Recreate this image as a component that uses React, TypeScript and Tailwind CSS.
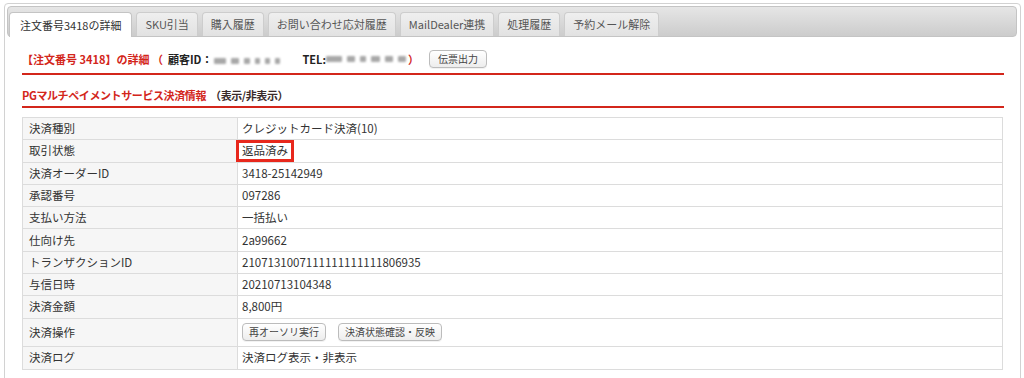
import React from "react";

const tabs = ["注文番号3418の詳細", "SKU引当", "購入履歴", "お問い合わせ応対履歴", "MailDealer連携", "処理履歴", "予約メール解除"];

const rows: { label: string; value: string }[] = [
  { label: "決済種別", value: "クレジットカード決済(10)" },
  { label: "取引状態", value: "返品済み" },
  { label: "決済オーダーID", value: "3418-25142949" },
  { label: "承認番号", value: "097286" },
  { label: "支払い方法", value: "一括払い" },
  { label: "仕向け先", value: "2a99662" },
  { label: "トランザクションID", value: "2107131007111111111111806935" },
  { label: "与信日時", value: "20210713104348" },
  { label: "決済金額", value: "8,800円" },
  { label: "決済操作", value: "" },
  { label: "決済ログ", value: "決済ログ表示・非表示" },
];

function SmallButton({ children, wide }: { children: React.ReactNode; wide?: boolean }) {
  return (
    <button className={`h-[18px] ${wide ? "px-[8px]" : "px-[6px]"} rounded-[4px] border border-[#bcbcbc] bg-gradient-to-b from-white to-[#ededed] text-[10px] leading-none text-[#444] shadow-[0_1px_0_rgba(0,0,0,0.05)]`}>
      {children}
    </button>
  );
}

// blurred-out personal info
function Blur({ widths }: { widths: number[] }) {
  return (
    <span className="inline-flex items-center gap-[5px] blur-[1.2px]">
      {widths.map((w, i) => (
        <span key={i} className="h-[6px] bg-[#a8a8a8] rounded-[1px]" style={{ width: w }} />
      ))}
    </span>
  );
}

export default function App() {
  return (
    <div className="w-[1024px] h-[378px] bg-white overflow-hidden pt-[3px] text-[11.5px] text-[#333]" style={{ fontFamily: '"Noto Sans CJK JP", "DejaVu Sans", sans-serif' }}>
      <div className="ml-[4px] w-[1017px] h-[420px] border border-[#d2d2d2] rounded-[4px] p-[2px]">
        <div className="h-[31px] rounded-[4px] border border-[#c4c4c4] bg-gradient-to-b from-[#e6e6e6] to-[#cccccc] flex items-end gap-[4px] pl-[1px] mr-[1px] text-[11px]">
          {tabs.map((t, i) => (
            <div
              key={t}
              className={
                i === 0
                  ? "h-[25px] -mb-px px-[10px] flex items-center rounded-t-[4px] border border-b-0 border-[#c4c4c4] bg-white text-[#333]"
                  : "h-[24px] px-[8px] flex items-center rounded-t-[4px] border border-b-0 border-[#cdcdcd] bg-gradient-to-b from-[#efefef] to-[#e2e2e2] text-[#555]"
              }
            >
              {t}
            </div>
          ))}
        </div>

        <div className="pl-[15px] pr-[14px]">
          <div className="mt-[13px] pb-[5px] border-b-2 border-[#d3261b]">
            <div className="h-[18px] flex items-center font-bold text-[11px]">
              <span className="text-[#d3261b]">【注文番号 3418】の詳細 （</span>
              <span className="ml-[5px] text-[#222]">顧客ID：</span>
              <span className="ml-[2px]"><Blur widths={[12, 8, 6, 5, 5, 5]} /></span>
              <span className="ml-[22px] text-[#222]">TEL:</span>
              <Blur widths={[16, 8, 6, 9, 8, 8]} />
              <span className="text-[#d3261b] ml-[2px]">）</span>
              <span className="ml-[10px] font-normal"><SmallButton wide>伝票出力</SmallButton></span>
            </div>
          </div>

          <div className="mt-[12px] pb-[3px] border-b-2 border-[#d3261b]">
            <div className="h-[16px] flex items-center font-bold text-[11px] tracking-[-0.4px]">
              <span className="text-[#d3261b]">PGマルチペイメントサービス決済情報</span>
              <span className="ml-[4px] text-[#3a2a2a]">（表示/非表示）</span>
            </div>
          </div>

          <div className="mt-[9px] w-[981px] border border-[#dcdcdc]">
            {rows.map((r, i) => (
              <div
                key={r.label}
                className={`flex ${i === 9 ? "h-[28px]" : "h-[22.3px]"} ${i < rows.length - 1 ? "border-b border-[#dcdcdc]" : ""}`}
              >
                <div className="w-[215px] shrink-0 bg-[#f6f6f6] border-r border-[#dcdcdc] pl-[6px] flex items-center">{r.label}</div>
                <div className="flex-1 pl-[4px] flex items-center">
                  {i === 1 ? (
                    <span className="-ml-[6px] h-[22px] px-[3px] flex items-center border-[3px] border-[#e8281c] relative">{r.value}</span>
                  ) : i === 9 ? (
                    <span className="flex gap-[12px]">
                      <SmallButton>再オーソリ実行</SmallButton>
                      <SmallButton>決済状態確認・反映</SmallButton>
                    </span>
                  ) : (
                    r.value
                  )}
                </div>
              </div>
            ))}
          </div>
        </div>
      </div>
    </div>
  );
}
